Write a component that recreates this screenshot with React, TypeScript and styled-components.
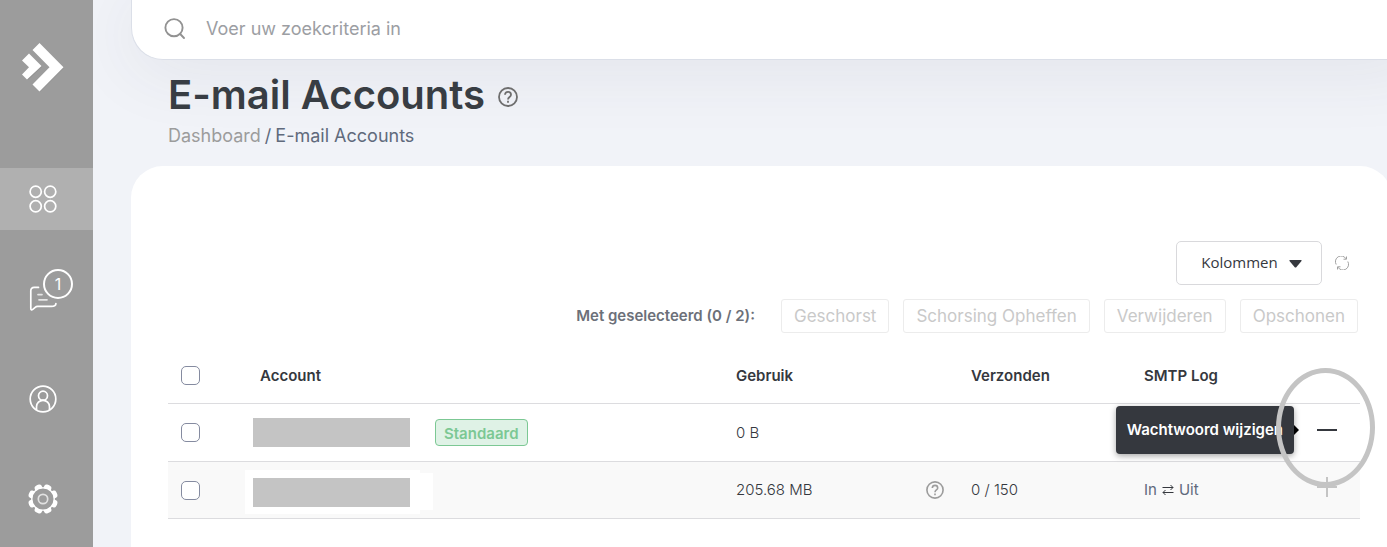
import React from "react";
import styled, { createGlobalStyle } from "styled-components";

const GlobalStyle = createGlobalStyle`
  *, *::before, *::after { box-sizing: border-box; }
  body {
    margin: 0;
    background: #f1f3f8;
    color: #35383e;
    font-family: Inter, "Liberation Sans", sans-serif;
    font-size: 15px;
    line-height: 24px;
  }
`;

const Shell = styled.div`
  display: flex;
  min-height: 100vh;
  overflow: hidden;
`;

const Sidebar = styled.nav`
  position: relative;
  z-index: 1;
  flex: 0 0 93px;
  display: flex;
  flex-direction: column;
  background: #9c9c9c;
`;

const LogoLink = styled.a`
  display: block;
  height: 168px;
  padding: 42px 0 0 20px;
`;

const NavList = styled.ul`
  display: flex;
  flex-direction: column;
  gap: 38px;
  margin: 0;
  padding: 0;
  list-style: none;
`;

const NavLink = styled.a<{ $active?: boolean }>`
  display: flex;
  align-items: center;
  justify-content: center;
  height: 62px;
  padding-right: 7px;
  color: #fff;
  background: ${(p) => (p.$active ? "#b0b0b0" : "transparent")};
  svg { display: block; }
`;

const IconWithCount = styled.span`
  position: relative;
`;

const Count = styled.span`
  position: absolute;
  top: -16px;
  left: 14px;
  width: 30px;
  height: 30px;
  border: 2px solid #fff;
  border-radius: 50%;
  font-size: 16px;
  line-height: 26px;
  text-align: center;
`;

const Content = styled.div`
  flex: 1;
  display: flex;
  flex-direction: column;
  min-width: 0;
  padding-left: 38px;
`;

const TopBar = styled.header`
  display: flex;
  align-items: center;
  gap: 20px;
  height: 60px;
  margin-right: -40px;
  padding: 0 32px 2px;
  background: #fff;
  border: 1px solid #dbdfe8;
  border-top: 0;
  border-radius: 0 0 0 32px;
  box-shadow: 0 8px 72px rgba(60, 60, 75, 0.09);
`;

const SearchInput = styled.input`
  flex: 1;
  min-width: 0;
  padding: 0;
  border: 0;
  outline: 0;
  background: transparent;
  font: inherit;
  font-size: 18px;
  color: #35383e;
  &::placeholder { color: #9c9ea3; opacity: 1; }
`;

const PageHead = styled.div`
  position: relative;
  display: flex;
  flex-direction: column;
  gap: 5px;
  padding: 11px 37px 18px;
`;

const TitleRow = styled.div`
  display: flex;
  align-items: center;
  gap: 13px;
  svg { margin-top: 4px; }
`;

const Title = styled.h1`
  margin: 0;
  font-size: 40px;
  font-weight: 600;
  line-height: 48px;
  color: #383d43;
`;

const IconButton = styled.button`
  display: inline-flex;
  flex: none;
  padding: 0;
  border: 0;
  background: transparent;
  color: ${(p) => p.color || "#6e6e6e"};
  cursor: pointer;
  svg { display: block; }
`;

const Crumbs = styled.nav`
  display: flex;
  gap: 4px;
  font-size: 18px;
  color: #606a7c;
`;

const CrumbLink = styled.a`
  color: #9c9c9c;
  text-decoration: none;
`;

const Card = styled.main`
  position: relative;
  flex: 1;
  margin-right: -5px;
  padding: 75px 32px 24px 37px;
  background: #fff;
  border-radius: 32px 32px 0 0;
`;

const Tools = styled.div`
  display: flex;
  justify-content: flex-end;
  align-items: center;
  gap: 13px;
  padding-right: 11px;
`;

const ColumnsButton = styled.button`
  display: flex;
  align-items: center;
  justify-content: center;
  gap: 11px;
  width: 146px;
  height: 44px;
  padding: 0 0 2px 5px;
  border: 1px solid #d9d9dc;
  border-radius: 5px;
  background: #fff;
  color: #35383e;
  font: 15px "Open Sans", sans-serif;
  svg { margin-top: 4px; }
`;

const BulkActions = styled.div`
  display: flex;
  justify-content: flex-end;
  align-items: center;
  gap: 14px;
  margin: 14px 0 15px;
  padding-right: 2px;
`;

const BulkLabel = styled.span`
  margin-right: 12px;
  font-weight: 600;
  color: #6c7079;
`;

const BulkButton = styled.button`
  height: 34px;
  padding: 0 12px;
  border: 1px solid #ececec;
  border-radius: 3px;
  background: #fff;
  font: 17px Inter, sans-serif;
  color: #c9c9c9;
`;

const Table = styled.table`
  width: 100%;
  table-layout: fixed;
  border-spacing: 0;
`;

const HeadCell = styled.th<{ $width?: string; $indent?: number }>`
  width: ${(p) => p.$width || "auto"};
  height: 56px;
  padding: 0 12px 0 ${(p) => p.$indent || 12}px;
  border-bottom: 1px solid #dcdcdf;
  text-align: left;
  font-weight: 600;
  white-space: nowrap;
`;

const Row = styled.tr<{ $striped?: boolean }>`
  height: ${(p) => (p.$striped ? 57 : 58)}px;
  background: ${(p) => (p.$striped ? "#f9f9f9" : "#fff")};
`;

const Cell = styled.td`
  padding: 0 12px;
  border-bottom: 1px solid #dcdcdf;
  font-weight: 300;
  color: #35383e;
`;

const CheckCell = styled(Cell)`
  padding-left: 13px;
`;

const AccountCell = styled(Cell)`
  padding: 0;
`;

const ActionCell = styled(Cell)`
  padding-bottom: 6px;
`;

const Check = styled.input.attrs({ type: "checkbox" })`
  display: block;
  appearance: none;
  width: 19px;
  height: 19px;
  margin: 0;
  border: 1px solid #858ba0;
  border-radius: 5px;
  background: #fff;
`;

const Account = styled.div`
  display: flex;
  align-items: center;
  gap: 25px;
  padding-left: 8px;
`;

const Redacted = styled.span`
  width: 157px;
  height: 29px;
  background: #c4c4c4;
`;

const Patch = styled.div`
  display: flex;
  align-items: center;
  padding-top: 3px;
  &::after {
    content: "";
    width: 13px;
    height: 37px;
    background: #fff;
  }
`;

const PatchInner = styled.div`
  display: flex;
  padding: 8px 10px 7px 8px;
  background: #fff;
`;

const Badge = styled.span`
  height: 27px;
  padding: 0 8px;
  border: 1px solid #7cc894;
  border-radius: 4px;
  background: #dff2e6;
  color: #7cc894;
  font-weight: 600;
  line-height: 27px;
`;

const Usage = styled.div`
  display: flex;
  align-items: center;
  justify-content: space-between;
  padding-right: 3px;
`;

const SmtpLinks = styled.div`
  display: flex;
  align-items: center;
  gap: 5px;
  font-weight: 400;
  a { color: #606a7c; text-decoration: none; }
`;

const Action = styled.div`
  position: relative;
  width: 20px;
  height: 20px;
`;

const Tooltip = styled.div`
  position: absolute;
  right: 43px;
  top: -14px;
  height: 48px;
  padding: 0 11px;
  border-radius: 4px;
  background: #35383e;
  box-shadow: 0 2px 6px rgba(0, 0, 0, 0.35);
  color: #fff;
  font-weight: 600;
  line-height: 48px;
  white-space: nowrap;
  &::after {
    content: "";
    position: absolute;
    left: 100%;
    top: 19px;
    border: 5px solid transparent;
    border-left-color: #000;
    border-right: 0;
  }
`;

const Ring = styled.span`
  position: absolute;
  z-index: 2;
  left: -41px;
  top: -52px;
  width: 99px;
  height: 119px;
  border: 5px solid #c4c4c4;
  border-radius: 50%;
  pointer-events: none;
`;

const Logo = () => (
  <svg width="46" height="52" viewBox="0 0 46 52" aria-hidden="true">
    <g fill="#808080" opacity=".35" transform="translate(1 1)">
      <path d="M19 1 43 25 19 49 12.500 42.500 29.500 25 12.500 8Z" />
      <path d="M9 12 21 24 7 37 2 32 9 25 2 18Z" />
    </g>
    <path fill="#fff" d="M19.500 1 43.500 25.300 19.500 49.500 12.500 42.500 29.500 25.300 12.500 8Z" />
    <path fill="#fff" d="M9 11.500 21.500 24 7 37.500 2 32.500 9 25.300 2 18.500Z" />
  </svg>
);

const GridIcon = () => (
  <svg width="28" height="28" viewBox="0 0 28 28" fill="none" stroke="#fff" strokeWidth="1.700" aria-hidden="true">
    <circle cx="6.700" cy="6.700" r="5.600" />
    <circle cx="21.200" cy="6.700" r="5.600" />
    <circle cx="6.700" cy="21.300" r="5.600" />
    <circle cx="21.200" cy="21.300" r="5.600" />
  </svg>
);

const MessageIcon = () => (
  <svg width="28" height="28" viewBox="0 0 28 28" fill="none" stroke="#fff" strokeWidth="1.700" strokeLinecap="round" aria-hidden="true">
    <path d="M9.500 2.400H5.200Q1.800 2.400 1.800 5.800V23.300Q1.800 25.700 3.800 24.400L6.200 22.300Q7.200 21.400 8.600 21.400H22.400Q26.900 21.400 26.900 18.500" />
    <path d="M9 9.600H13M10 14.800H18" opacity=".75" />
  </svg>
);

const UserIcon = () => (
  <svg width="28" height="28" viewBox="0 0 28 28" fill="none" stroke="#fff" strokeWidth="1.700" aria-hidden="true">
    <circle cx="14" cy="14" r="12.800" />
    <circle cx="14" cy="10.700" r="4.500" />
    <path d="M7.500 25V21.800A6.500 6.500 0 0 1 20.500 21.800V25" />
  </svg>
);

const gearTeeth = [22.5, 67.5, 112.5, 157.5, 202.5, 247.5, 292.5, 337.5];

const GearIcon = () => (
  <svg width="30" height="30" viewBox="0 0 30 30" fill="none" stroke="#fff" aria-hidden="true">
    {gearTeeth.map((angle) => (
      <path
        key={angle}
        fill="#fff"
        stroke="none"
        transform={`rotate(${angle} 15 15)`}
        d="M11 4.800 11.300 2Q11.600 .2 13.300 .1Q15 -.2 16.700 .1Q18.400 .2 18.700 2L19 4.800Q15 3 11 4.800Z"
      />
    ))}
    <circle cx="15" cy="15" r="11.200" strokeWidth="1.300" />
    <circle cx="15" cy="15" r="4.700" strokeWidth="1.700" opacity=".7" />
  </svg>
);

const SearchIcon = () => (
  <svg width="22" height="22" viewBox="0 0 22 22" fill="none" stroke="#929292" strokeWidth="1.900" strokeLinecap="round" aria-hidden="true">
    <circle cx="10" cy="9.700" r="8.600" />
    <path d="M16.200 16 20 20" />
  </svg>
);

const HelpIcon = ({ size }: { size: number }) => (
  <svg width={size} height={size} viewBox="0 0 20 20" fill="none" stroke="currentColor" strokeWidth="1.800" aria-hidden="true">
    <circle cx="10" cy="10" r="9" />
    <path d="M7 7.800C7.200 3.800 13 4 13 7.700C13 9.900 10 10 10 12.400" />
    <path d="M10 13.800V15.800" />
  </svg>
);

const RefreshIcon = () => (
  <svg width="14" height="14" viewBox="0 0 14 14" fill="none" stroke="currentColor" strokeWidth="1" aria-hidden="true">
    <path d="M1.200 8.500A5.600 5.600 0 0 1 11 2.800M12.800 5.500A5.600 5.600 0 0 1 3 11.200" />
    <path d="M11.500 .5V3.200H8.500M2.500 13.500V10.800H5.500" />
  </svg>
);

const SwapIcon = () => (
  <svg width="12" height="12" viewBox="0 0 12 12" fill="none" stroke="#35383e" strokeWidth="1" aria-hidden="true">
    <path d="M0.500 3.500H11M8.500 1 11 3.500 8.500 6M11.500 8.500H1M3.500 6 1 8.500 3.500 11" />
  </svg>
);

const bulkActions = ["Geschorst", "Schorsing Opheffen", "Verwijderen", "Opschonen"];

export default function App() {
  return (
    <>
      <GlobalStyle />
      <Shell>
        <Sidebar aria-label="Hoofdmenu">
          <LogoLink href="#" aria-label="Start"><Logo /></LogoLink>
          <NavList>
            <li><NavLink href="#" $active aria-label="Dashboard"><GridIcon /></NavLink></li>
            <li>
              <NavLink href="#" aria-label="Berichten">
                <IconWithCount><MessageIcon /><Count>1</Count></IconWithCount>
              </NavLink>
            </li>
            <li><NavLink href="#" aria-label="Profiel"><UserIcon /></NavLink></li>
            <li><NavLink href="#" aria-label="Instellingen"><GearIcon /></NavLink></li>
          </NavList>
        </Sidebar>
        <Content>
          <TopBar>
            <SearchIcon />
            <SearchInput type="search" aria-label="Zoeken" placeholder="Voer uw zoekcriteria in" />
          </TopBar>
          <PageHead>
            <TitleRow>
              <Title>E-mail Accounts</Title>
              <IconButton aria-label="Help"><HelpIcon size={20} /></IconButton>
            </TitleRow>
            <Crumbs aria-label="Kruimelpad">
              <CrumbLink href="#">Dashboard</CrumbLink>
              <span>/</span>
              <span>E-mail Accounts</span>
            </Crumbs>
          </PageHead>
          <Card>
            <Tools>
              <ColumnsButton aria-haspopup="menu">
                Kolommen
                <svg width="13" height="8" viewBox="0 0 13 8" aria-hidden="true">
                  <path fill="#35383e" d="M1 0H12Q13 0 12.500 1L7.500 7Q6.500 8 5.500 7L.5 1Q0 0 1 0Z" />
                </svg>
              </ColumnsButton>
              <IconButton color="#a0a0a0" aria-label="Vernieuwen"><RefreshIcon /></IconButton>
            </Tools>
            <BulkActions>
              <BulkLabel>Met geselecteerd (0 / 2):</BulkLabel>
              {bulkActions.map((label) => (
                <BulkButton key={label} disabled>{label}</BulkButton>
              ))}
            </BulkActions>
            <Table>
              <thead>
                <tr>
                  <HeadCell $width="77px" $indent={13}><Check aria-label="Alles selecteren" /></HeadCell>
                  <HeadCell $indent={15}>Account</HeadCell>
                  <HeadCell $width="235px">Gebruik</HeadCell>
                  <HeadCell $width="173px">Verzonden</HeadCell>
                  <HeadCell $width="173px">SMTP Log</HeadCell>
                  <HeadCell $width="55px" aria-label="Acties" />
                </tr>
              </thead>
              <tbody>
                <Row>
                  <CheckCell><Check aria-label="Account 1 selecteren" /></CheckCell>
                  <AccountCell>
                    <Account><Redacted /><Badge>Standaard</Badge></Account>
                  </AccountCell>
                  <Cell>0 B</Cell>
                  <Cell />
                  <Cell />
                  <ActionCell>
                    <Action>
                      <IconButton color="#35383e" aria-label="Wachtwoord wijzigen">
                        <svg width="20" height="20" stroke="currentColor" strokeWidth="2"><path d="M0 10H20" /></svg>
                      </IconButton>
                      <Tooltip role="tooltip">Wachtwoord wijzigen</Tooltip>
                      <Ring />
                    </Action>
                  </ActionCell>
                </Row>
                <Row $striped>
                  <CheckCell><Check aria-label="Account 2 selecteren" /></CheckCell>
                  <AccountCell>
                    <Patch><PatchInner><Redacted /></PatchInner></Patch>
                  </AccountCell>
                  <Cell>
                    <Usage>
                      205.68 MB
                      <IconButton color="#9c9c9c" aria-label="Help bij gebruik"><HelpIcon size={18} /></IconButton>
                    </Usage>
                  </Cell>
                  <Cell>0 / 150</Cell>
                  <Cell>
                    <SmtpLinks><a href="#">In</a><SwapIcon /><a href="#">Uit</a></SmtpLinks>
                  </Cell>
                  <ActionCell>
                    <Action>
                      <IconButton color="#c4c4c4" aria-label="Meer acties">
                        <svg width="20" height="20" stroke="currentColor" strokeWidth="2"><path d="M0 10H20M10 0V20" /></svg>
                      </IconButton>
                    </Action>
                  </ActionCell>
                </Row>
              </tbody>
            </Table>
          </Card>
        </Content>
      </Shell>
    </>
  );
}
